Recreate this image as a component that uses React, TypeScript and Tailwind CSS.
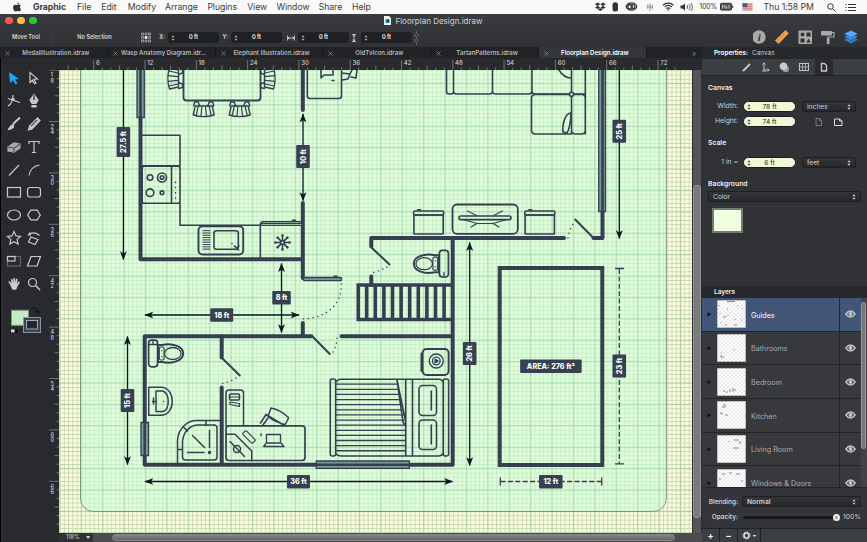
import type { ReactNode } from 'react';

const INK = '#363f51';
const ARROW = '#0a1526';

const menus: [string, string][] = [
  ['File', 'w-[24.3px]'], ['Edit', 'w-[26.5px]'], ['Modify', 'w-[37.2px]'], ['Arrange', 'w-[42.4px]'],
  ['Plugins', 'w-[39.8px]'], ['View', 'w-[29.3px]'], ['Window', 'w-[42.2px]'], ['Share', 'w-[33.4px]'], ['Help', 'w-[30px]'],
];

const tabs = ['MedalIllustration.idraw', 'Wasp Anatomy Diagram.idr...', 'Elephant Illustration.idraw', 'OldTvIcon.idraw', 'TartanPatterns.idraw', 'Floorplan Design.idraw'];

function MenuBar() {
  return (
    <header className="flex h-[14px] shrink-0 items-center bg-[#f9f9f9] text-[8.7px] text-[#3c3c3c] tracking-[-0.05px]">
      <svg className="ml-3 h-[10px] w-[10px]" viewBox="0 0 20 20" fill="#333">
        <path d="M14 1c0 2-1.700 4-4 4 0-2 2-4 4-4zM10.500 6.200c1 0 2-1 3.800-1 1.500 0 2.700.8 3.400 1.800-3 2-2.500 6 .5 7-1 2.800-2.700 5-4.200 5-1.200 0-1.800-.8-3.400-.8S8.300 19 7.200 19C4.500 19 2 14.300 2 10.900 2 7.300 4.200 5.300 6.600 5.300c1.600 0 2.800.9 3.900.9z" />
      </svg>
      <span className="ml-[11px] w-[44px] font-bold">Graphic</span>
      {menus.map(([m, w]) => <span key={m} className={`${w} shrink-0`}>{m}</span>)}
      <svg className="ml-auto mr-[12px] h-[14px] w-[164px]" viewBox="590 0 164 14" fill="none" stroke="#333" strokeWidth="1">
        <g fill="#333" stroke="none">
          <path d="M592 4.200l2.600-1.600 2.700 1.700-2.700 1.600zM597.300 4.300l2.700-1.700 2.600 1.600-2.600 1.700zM592 7.400l2.600-1.600 2.700 1.700-2.700 1.600zM597.300 7.500l2.700-1.700 2.600 1.600-2.600 1.700zM594.700 9.500l2.600-1.500 2.600 1.500-2.600 1.600z" />
          <rect x="609.500" y="2.300" width="5.500" height="9.300" rx="2.500" />
        </g>
        <ellipse cx="628.500" cy="6.500" rx="5.200" ry="3.600" strokeWidth="1.300" />
        <circle cx="627" cy="6.700" r="2.200" strokeWidth="1.300" /><circle cx="630" cy="6.500" r="1.900" strokeWidth="1.300" />
        <path d="M644.500 5v3.500l2.500-1.700zM649.500 5v3.500L647 6.800zM647 3v8" stroke="#999" />
        <path d="M660 5.200c3-2.800 7.500-2.800 10.500 0M661.700 7c2.200-2 5-2 7.200 0M663.500 8.800c1-1 2.500-1 3.700 0" strokeWidth="1.200" />
        <circle cx="665.300" cy="10" r=".8" fill="#333" stroke="none" />
        <path d="M677.500 5.500h2l2.500-2v7l-2.500-2h-2z" fill="#333" stroke="none" />
        <path d="M684 5c.8 1 .8 3 0 4M686 4c1.300 1.500 1.300 4.500 0 6M688 3c1.800 2 1.800 6 0 8" stroke="#666" />
        <text x="696.500" y="9.300" fontSize="7.500" fill="#333" stroke="none" textLength="17.500" lengthAdjust="spacingAndGlyphs">100%</text>
        <rect x="717.500" y="3.300" width="11" height="6.800" rx="1" fill="#555" /><path d="M729.800 5.500v2.500" />
        <path d="M719.500 5v3.500M722 5l-1 2h3l-1 2M726 5v3.500" stroke="#ddd" strokeWidth=".8" />
        <rect x="739.500" y="3.200" width="10" height="7" fill="#e9c5c3" stroke="none" />
        <path d="M739.500 4.200h10M739.500 6.200h10M739.500 8.200h10M739.500 10h10" stroke="#d2605c" strokeWidth=".8" />
        <rect x="739.500" y="3.200" width="4.800" height="4" fill="#465b8e" stroke="none" />
      </svg>
      <span className="-ml-[5px] w-[49px] whitespace-nowrap">Thu 1:58 PM</span>
      <svg className="ml-[14px] mr-[9.500px] h-[12px] w-[31px]" viewBox="0 0 31 12" fill="none" stroke="#333" strokeWidth="1">
        <circle cx="3.500" cy="5.500" r="2.800" /><path d="M5.500 7.500l3 3.200M21 3.500h8M21 6.500h8M21 9.500h8" /><path d="M18.500 3.500h1M18.500 6.500h1M18.500 9.500h1" />
      </svg>
    </header>
  );
}

function NumField({ label, gap }: { label: ReactNode; gap?: boolean }) {
  return (
    <div className={`flex items-center ${gap ? 'ml-[4px]' : ''}`}>
      <span className="mr-[3px] flex w-[8px] justify-end">{label}</span>
      <span className="relative flex h-[11px] w-[51px] items-center justify-center rounded-[3px] bg-[#202124] text-white">
        <span className="absolute left-[3px] text-[#aaa]"><Stepper /></span>0 ft
      </span>
    </div>
  );
}

function Stepper() {
  return <svg className="h-[6px] w-[4px]" viewBox="0 0 4 6" fill="currentColor"><path d="M.4 2.300L2 .3l1.600 2zM.4 3.700L2 5.700l1.600-2z" /></svg>;
}

function Toolbar() {
  return (
    <section className="flex h-[33px] shrink-0 flex-col bg-gradient-to-b from-[#3a3c40] to-[#303135]">
      <div className="relative flex h-[13px] items-center justify-center">
        <div className="absolute left-[5px] flex gap-[4.500px]">
          <i className="size-[7.500px] rounded-full bg-[#fc5753]" /><i className="size-[7.500px] rounded-full bg-[#fdbc40]" /><i className="size-[7.500px] rounded-full bg-[#27c93f]" />
        </div>
        <svg className="mr-[4px] h-[9px] w-[7px]" viewBox="0 0 7 9"><path d="M0 0h5l2 2v7H0z" fill="#f3f5f5" /><path d="M1.500 3h4v4h-4z" fill="#278bb6" /><path d="M3 4h2v2H3z" fill="#17425a" /></svg>
        <span className="text-[8px] text-[#d2d2d2]">Floorplan Design.idraw</span>
      </div>
      <div className="flex h-[20px] items-center pt-[1px] text-[5.600px] font-semibold text-[#d8d8d8]">
        <span className="w-[51px] pl-[12px]">Move Tool</span>
        <span className="flex h-[20px] w-[87px] items-center justify-center border-x border-[#3b3d40]">No Selection</span>
        <svg className="ml-[3px] h-[11px] w-[10px]" viewBox="0 0 10 11" fill="none" stroke="#bbb" strokeWidth=".7"><path d="M.5 1h2v2h-2zM4 1h2v2H4zM7.500 1h2v2h-2zM.5 8h2v2h-2zM4 8h2v2H4zM7.500 8h2v2h-2zM.5 4.500h2v2h-2zM7.500 4.500h2v2h-2z" /><path d="M4 4.500h2v2H4z" fill="#fff" stroke="#fff" /></svg>
        <div className="ml-[6px] flex gap-[1px]">
          <NumField label="X:" /><NumField label="Y:" />
          <NumField gap label={<svg className="h-2 w-2" viewBox="0 0 8 8" stroke="#ddd" fill="none"><path d="M.5 1.500v5M7.500 1.500v5M1 4h6M2.500 3L1 4l1.500 1M5.500 3L7 4 5.500 5" strokeWidth=".8" /></svg>} />
          <NumField label={<svg className="h-2 w-2" viewBox="0 0 8 8" stroke="#ddd" fill="none"><path d="M2 .5h4M2 7.500h4M4 1v6M3 2.500L4 1l1 1.500M3 5.500L4 7l1-1.500" strokeWidth=".8" /></svg>} />
        </div>
        <svg className="ml-[2px] h-[14px] w-[5px]" viewBox="0 0 5 14" stroke="#777" fill="none" strokeWidth=".8"><path d="M2.500 0v2M2.500 12v2M2.500 6v2" /><path d="M1 6V4c0-1.500 3-1.500 3 0v2M1 8v2c0 1.500 3 1.500 3 0V8" /></svg>
        <svg className="-mt-[2px] ml-auto mr-[6px] h-[18px] w-[108px]" viewBox="0 0 108 18" fill="#aaa">
          <circle cx="6" cy="9" r="6.700" /><text x="6.300" y="13" fill="#303135" fontSize="11" fontStyle="italic" fontWeight="700" fontFamily="Liberation Serif, serif" textAnchor="middle">i</text>
          <path d="M32.500 2l3.300 3.300L25.500 16 22 12.500z" fill="#f2a444" /><path d="M24.500 11l1.500 1.500M27 8.500l1.500 1.500M29.500 6l1.500 1.500" stroke="#91591b" strokeWidth=".8" />
          <rect x="45.500" y="2.500" width="13.500" height="13.500" rx="1" /><g fill="#303135"><circle cx="49.500" cy="6.500" r="1.900" /><rect x="53.500" y="4.500" width="4" height="4" rx=".5" /><rect x="47.500" y="10.500" width="4" height="4" rx=".5" /><path d="M53.300 14.500l2.200-4 2.200 4z" /></g>
          <rect x="68" y="3" width="11" height="4.500" rx="1" /><path d="M79 4.500h2v4.500h-6v2" stroke="#aaa" fill="none" strokeWidth="1.200" /><rect x="73.800" y="10" width="2.700" height="6" rx=".6" />
          <path d="M91 11.700l7-3.500 7 3.500-7 3.700z" fill="#317abd" /><path d="M91 8.700l7-3.500 7 3.500-7 3.700z" fill="#3b8fdc" stroke="#303135" strokeWidth=".4" /><path d="M91 5.800l7-3.500 7 3.500-7 3.700z" fill="#55a9ff" stroke="#303135" strokeWidth=".4" />
        </svg>
      </div>
    </section>
  );
}

function Tabs() {
  return (
    <nav className="flex h-[12px] items-center bg-[#222326] text-[6.050px] font-semibold text-[#b5b5b5]">
      {tabs.map((t, i) => (
        <div key={t} className={`flex h-full w-[107.800px] shrink-0 items-center border-r border-[#17181a] ${i === 5 ? 'bg-[#34363a] text-white' : ''}`}>
          <svg className="ml-[5px] h-[5px] w-[5px]" viewBox="0 0 5 5" stroke="#888"><path d="M.5.500l4 4M4.500.5l-4 4" strokeWidth=".8" /></svg>
          <span className="flex-1 whitespace-nowrap pr-[5px] text-center">{t}</span>
        </div>
      ))}
      <span className="ml-[45px] text-[8px] font-normal text-[#777]">»</span>
    </nav>
  );
}

const toolIcons: ReactNode[] = [
  <path d="M3 2l1 11 3-2.500 2.500 4 2-1.200L9 9.500l4-.5z" fill="#22a3ff" stroke="none" />,
  <path d="M4 2.500v10l2.500-2.300 2 3.500 1.500-.8-2-3.700 3.500-.2z" />,
  <><path d="M2 13c3.500-2 5-5 5-11M2 5.500l12 4" /><path d="M5.500 5H8.500V8H5.500z" fill="#c4c4c4" stroke="none" /></>,
  <><path d="M8 1.500l4 5.500-2 3.500H6L4 7z" fill="#c4c4c4" /><path d="M6 12.500h4v1.500H6z" fill="#c4c4c4" /><path d="M8 2v5" stroke="#292a2d" /></>,
  <><path d="M14 1.500L7 8" strokeWidth="2" /><path d="M7 8.500c2 3-2 5-5 5 2-1 1.500-4 5-5z" fill="#c4c4c4" /></>,
  <><path d="M11.500 2L14 4.500 6 13l-3.500 1L3.500 10z" fill="#c4c4c4" /><path d="M5 10l6-6" stroke="#555" /></>,
  <><path d="M2 8l6-4 6 1v4l-6 4-6-1z" fill="#a9a9a9" stroke="#a9a9a9" /><path d="M2 8l6 1.200L14 5M8 9v4" stroke="#555" /></>,
  <path d="M3 5V2.500h10V5M8 2.500v11M5.800 13.500h4.400" />,
  <path d="M3 13.500L13 3" />,
  <path d="M3 13.500C4 7 8 4 13.500 3" />,
  <rect x="1.500" y="3.500" width="13" height="9.500" />,
  <rect x="1.500" y="3.500" width="13" height="9.500" rx="2.500" />,
  <ellipse cx="8" cy="8" rx="6.500" ry="5" />,
  <path d="M4.800 3.200h6.400L14.300 8l-3.100 4.800H4.800L1.700 8z" />,
  <path d="M8 1.500l2 4.400 4.500.5-3.400 3 1 4.700L8 11.700l-4.100 2.400 1-4.700-3.400-3L6 5.900z" />,
  <><path d="M5 7l7 2.500-3 5-6.500-2.500z" /><path d="M2.500 5C5 2 10 2 13.500 5.500M4 2.500L2.500 5H5" /></>,
  <><rect x="1.500" y="3.500" width="13" height="9.500" stroke="#666" /><rect x="1.500" y="3.500" width="7.500" height="4.500" /></>,
  <path d="M5 3.500h9.500L11 13H1.500z" />,
  <path d="M4 8L2.500 6l1-.7L6 8 5 3.500l1.200-.3L7.500 7V2.200h1.200L9 7l1.200-4.200 1.200.4L10.700 8l2-2.500 1 .7L11.500 10 10 13.500H6.500z" fill="#d0d0d0" strokeWidth=".4" />,
  <><circle cx="6.500" cy="6.500" r="4" /><path d="M9.500 9.500l4.500 4.500" strokeWidth="1.600" /></>,
];

function ToolPalette() {
  return (
    <aside className="flex w-[49px] shrink-0 flex-col border-l border-black bg-[#292a2d] pt-[9px]">
      <div className="ml-[3px] grid auto-rows-[22.800px] grid-cols-[20px_20px]">
        {toolIcons.map((g, i) => (
          <svg key={i} className="m-auto size-[16px]" viewBox="0 0 16 16" fill="none" stroke="#cacaca" strokeWidth="1.200">{g}</svg>
        ))}
      </div>
      <svg className="ml-[9px] mt-[10px] h-[28px] w-[34px]" viewBox="10 306 34 28">
        <rect x="11.500" y="311.300" width="17" height="15" fill="#c4ecc3" stroke="#8d9290" />
        <rect x="23.500" y="318.500" width="17" height="15" fill="#394454" stroke="#8995a3" />
        <rect x="26.500" y="321.500" width="11" height="8.500" fill="#24262b" stroke="#a0a8b0" />
        <rect x="11" y="330.500" width="3.500" height="2.800" fill="#ddd" /><rect x="15" y="330.500" width="3" height="3" fill="#111" />
        <path d="M31 309c4-1 6 1 7 5M36 312l2 2 1.500-2.500" fill="none" stroke="#111" strokeWidth="1.200" />
      </svg>
    </aside>
  );
}

function HRuler() {
  const ticks = Array.from({ length: 72 }, (_, i) => i - 3);
  return (
    <svg className="block h-[12px] w-full bg-[#292a2d]" viewBox="49 58 653 12" stroke="#858585" strokeWidth=".8">
      {ticks.map((i) => {
        const x = 93.700 + i * 8.550;
        if (x > 690) return null;
        const h = i % 6 === 0 ? 10 : i % 3 === 0 ? 4.500 : 2.500;
        return <g key={i}><path d={`M${x} 70v${-h}`} />{i % 6 === 0 && <text x={x + 2.300} y="65" fontSize="6" fontWeight="500" fill="#d0d0d0" stroke="none">{i + 6}</text>}</g>;
      })}
    </svg>
  );
}

function VRuler() {
  const ticks = Array.from({ length: 54 }, (_, i) => i - 6);
  return (
    <svg className="block h-[472px] w-[10px] shrink-0 bg-[#292a2d]" viewBox="49 70 10 472" stroke="#858585" strokeWidth=".8">
      {ticks.map((i) => {
        const y = 121.500 + i * 8.567;
        if (y > 531) return null;
        const w = i % 6 === 0 ? 10 : i % 3 === 0 ? 4.500 : 2.500;
        const s = String(24 + i);
        return <g key={i}><path d={`M59 ${y}h${-w}`} />{i % 6 === 0 && <text fontSize="5.500" fontWeight="500" fill="#d0d0d0" stroke="none"><tspan x="50.500" y={y + 7.300}>{s[0]}</tspan><tspan x="50.500" y={y + 12.500}>{s[1]}</tspan></text>}</g>;
      })}
    </svg>
  );
}

function Label({ x, y, w, text, vertical }: { x: number; y: number; w: number; text: string; vertical?: boolean }) {
  return (
    <g transform={`translate(${x} ${y})${vertical ? ' rotate(-90)' : ''}`}>
      <rect x={-w / 2} y={-6.800} width={w} height={13.600} rx="1" fill="#374052" />
      <text textAnchor="middle" y="2.700" fontSize="7.200" fontWeight="800" fill="#f6fff2">{text}</text>
    </g>
  );
}

function Dim({ d }: { d: string }) {
  return <path d={d} stroke={ARROW} strokeWidth="1.300" fill="none" markerStart="url(#arrow)" markerEnd="url(#arrow)" />;
}

function Chair({ x, y, r = 0 }: { x: number; y: number; r?: number }) {
  return (
    <g transform={`translate(${x} ${y}) rotate(${r})`} strokeWidth="1.400">
      <path d="M-8.500-7.500h3l1.500 4M8.500-7.500h-3L4-3.500" /><path d="M-8.500-3.500h17l2 9c-6 2-15 2-21 0z" />
      <path d="M-5.500-3l-2 9M-1.800-3l-1 10M1.800-3l1 10M5.500-3l2 9" strokeWidth="1.200" /><path d="M-9-7.500l-1 4M9-7.500l1 4" />
    </g>
  );
}

const PAGE = 'M80.500 60v438.500a13 13 0 0 0 13 13h559.800a13 13 0 0 0 13-13V60';

function Canvas() {
  const stripes = Array.from({ length: 14 }, (_, i) => 384.200 + i * 5.120);
  const treads = Array.from({ length: 10 }, (_, i) => 366.700 + i * 8.600);
  return (
    <svg className="block h-[463px] w-[633px]" viewBox="59 70 633 463" fill="none" stroke={INK} strokeLinecap="round" strokeLinejoin="round">
      <defs>
        <pattern id="fine" x="80.900" y="83.100" width="4.280" height="4.280" patternUnits="userSpaceOnUse"><path d="M0 .5H4.280M.5 0V4.280" stroke="#8fd0a0" strokeOpacity=".34" strokeWidth=".8" strokeLinecap="butt" /></pattern>
        <pattern id="coarse" x="80.500" y="82.700" width="21.400" height="21.400" patternUnits="userSpaceOnUse"><path d="M0 .8H21.400M.8 0V21.400" stroke="#7fc090" strokeOpacity=".5" strokeWidth="1" strokeLinecap="butt" /></pattern>
        <pattern id="outer" x="80.900" y="83.100" width="4.280" height="4.280" patternUnits="userSpaceOnUse"><path d="M0 .5H4.280M.5 0V4.280" stroke="#a8bd90" strokeOpacity=".62" strokeWidth=".9" strokeLinecap="butt" /></pattern>
        <marker id="arrow" markerUnits="userSpaceOnUse" markerWidth="9" markerHeight="7.500" refX="7" refY="4" viewBox="0 0 8 8" orient="auto-start-reverse" preserveAspectRatio="none"><path d="M0 .3L8 4 0 7.700 2 4z" fill={ARROW} stroke="none" /></marker>
      </defs>
      <g stroke="none">
        <rect x="59" y="70" width="633" height="463" fill="#fbfde0" />
        <rect x="59" y="70" width="633" height="463" fill="url(#outer)" />
        <rect x="59" y="70" width="633" height="463" fill="url(#coarse)" />
        <path d={PAGE} fill="#e1fddc" /><path d={PAGE} fill="url(#fine)" /><path d={PAGE} fill="url(#coarse)" />
      </g>
      <path d={PAGE} stroke="#70917a" strokeWidth=".9" />

      <g strokeWidth="4">
        <path d="M140.500 60V259.300H302.800M302.800 60V110M302.800 203V278M302.800 323V334" />
        <path d="M371.300 246.500V238H564M452.700 238V464.700H144.700V336.300H311.500M341.500 336.300H452M371.300 276.500V285M593.500 238H602.500V60" />
        <path d="M221.700 336.300V357.500M221.700 387.500V464" />
        <rect x="499.700" y="268" width="102.600" height="197" strokeLinejoin="miter" />
      </g>
      <g fill="#7b9b98" stroke={INK} strokeWidth="1.300" strokeLinejoin="miter">
        <path d="M137 60h7.300v57.500H137zM598.700 60h6.800v151.500h-6.800zM141 422.500h7.500v33H141zM316.300 461h93v7.300h-93z" />
        <rect x="303.500" y="277.500" width="38" height="3.200" rx="1" />
      </g>
      <path d="M140.500 70v47M602.500 70v141M144.700 423v32M317 464.700h92" strokeWidth="2.600" />
      <path d="M334 276.300h3" strokeWidth="1.500" />
      <g strokeWidth="2">
        <path d="M372 248L389.500 264.500M575.200 219.500L592.500 237M313 337L329.700 354M223 359L239.800 375.500" />
      </g>
      <g strokeWidth="1.400" strokeDasharray="0.100 4.700">
        <path d="M341.300 284C342 305 326 318 303 319M387 267Q380 271 371 273M568 238Q569 229 575 221M333 352Q337 345 337 336.500M236 378Q230 382 222 383.500" />
      </g>

      <g strokeWidth="1.600">
        <path d="M142 135.300h38V165.500M142 165.900h38M180 203v22.200h80M260.300 258V225q0-3.300 3.300-3.300H302" />
        <rect x="142.200" y="166.300" width="37.800" height="37" rx="2" /><path d="M171.500 166.500v37" />
        <circle cx="150" cy="177.500" r="2.800" /><circle cx="162" cy="177.500" r="4.500" /><circle cx="162" cy="177.500" r="1.800" /><circle cx="150" cy="192.700" r="3.800" /><circle cx="162" cy="192.700" r="1.800" />
        <path d="M175.500 182.300v.1M175.500 187.500v.1M175.500 192.800v.1M175.500 198v.1" />
        <rect x="198.500" y="226.200" width="44.700" height="28.300" rx="4" strokeWidth="1.900" /><rect x="214" y="230.700" width="24.300" height="18.600" rx="2.500" />
        <path d="M202.500 230.700h8M202.500 233h8M202.500 235.300h8M202.500 237.600h8M202.500 239.900h8M202.500 242.200h8M202.500 244.500h8M202.500 246.800h8M202.500 249.100h8" strokeWidth="1" strokeLinecap="butt" />
        <path d="M232 243.500v.1M234.500 246l4 4M239 246l-4 3.500" />
        <path d="M262 223.500h40v2H262z" fill="#9bb8a8" strokeWidth="1" /><path d="M292.500 220.300h3" />
        <g transform="translate(282.500 242.500)">
          {[0, 45, 90, 135, 180, 225, 270, 315].map((a) => <g key={a} transform={`rotate(${a})`}><path d="M0 2v4.500" /><circle cy="-7" r="1.300" fill={INK} stroke="none" /></g>)}<circle r="2" />
        </g>
        <path d="M183.500 60v37.500q0 3 3 3h71q3 0 3-3V60" strokeWidth="1.800" />
        <Chair x={203.700} y={109.500} /><Chair x={239.700} y={109.500} /><Chair x={175} y={78.500} r={90} /><Chair x={268} y={78.500} r={-90} />
        <path d="M307.300 60v36q0 2.500 2.500 2.500h29.200q2.500 0 2.500-2.500V60M321 70v8l3-3h9v-5M332 80.500h2M342 73l8 1-2 5-6 1M350 74l2-4M351 77l5 1 1-8" />
      </g>

      <g strokeWidth="1.600">
        <path d="M446.500 60v31.500q0 2.500 2.500 2.500h2q2.500 0 2.500-2.500V60M453.500 60v31q0 3 3 3h33q3 0 3-3V60M492.500 60v31q0 3 3 3h33.500q3 0 3-3V60M532 60v31q0 3 3 3h33.500q3 0 3-3V60M571.500 60v31q0 3 3 3h10.500" />
        <path d="M535.500 94.500h33q3 0 3 3v36.500h-36q-4 0-4-4V98.500q0-4 4-4zM571.500 130V98q0-3.500 3.500-3.500h6.800q3.500 0 3.500 3.500V130q0 4-4 4H576q-4.500 0-4.500-4zM585.300 60v74" /><path d="M571 113c-6 0-9 12-8 19l4 1c2-3 4-12 4-20M559 70q5 8 12 8" />
        <circle cx="571.500" cy="94.200" r="2" fill="#e1fcdb" />
        {[413.600, 524.800].map((x) => <g key={x}><rect x={x} y="211" width="30" height="4" rx="1" /><rect x={x + .3} y="215" width="29.300" height="19" rx=".5" /><path d={`M${x + 4} 209.800h3`} /></g>)}
        <rect x="452.500" y="204.500" width="65.300" height="29.300" rx="4.500" strokeWidth="1.800" /><rect x="459" y="216" width="52" height="3.600" rx="1.800" />
        <path d="M467.500 211l9 4.500M502.500 211l-9 4.500M463 219.500l14 4h16l14-4M477 223.500l-6 3.500M493 223.500l6 3.500" strokeWidth="1.200" />
      </g>

      <g strokeWidth="3.600" strokeLinejoin="miter"><path d="M452 285H358.300v34.500H452" />{treads.map((x) => <path key={x} d={`M${x} 286v33`} />)}</g>

      {[0, 1].map((i) => (
        <g key={i} transform={i ? 'translate(148.300 353.500)' : 'translate(448.700 263.700) scale(-1 1)'} strokeWidth="1.700">
          <rect x=".3" y="-13.300" width="9" height="26.600" rx="3" />
          <path d="M10-8.500h4c12-2.500 22 2 22 8.500s-10 11-22 8.500h-4z" strokeWidth="2" transform="scale(.97 1)" />
          <ellipse cx="24.500" rx="8.300" ry="6" strokeWidth="1.300" /><rect x="11" y="-6.500" width="4.800" height="13" rx="1.500" strokeWidth="1.200" />
          <path d="M13.500-3v.1M13.500 3v.1" strokeWidth="1.200" /><path d={i ? 'M.5-9h8.500M4.700-13v4' : 'M4.700 9v4'} stroke={i ? INK : '#26309a'} strokeWidth="1.300" />
        </g>
      ))}

      <g strokeWidth="1.500">
        <path d="M148.700 387.300H161c15 0 15 28 0 28H148.700zM156 391h7c7 3 7 18 0 20.500h-7zM152.500 401.500h4M153.500 398v6M163.500 401.500v.1" />
        <path d="M177.500 463V440c1-12 10-19.500 19-19.500H220M177.500 449.500h5M206 421v4.500M184 427.500l3.500 3.500" />
        <path d="M182.500 457v-16c1-9 7-16 16-16h15.500q3 0 3 3v29q0 3-3 3h-28.500q-3 0-3-3zM209.500 430.500v17M192.500 435.500l12 12M187.500 452.500h16.500" /><circle cx="209.500" cy="452.500" r="1" fill={INK} />
        <path d="M226 426V393q0-3 3-3h11.500q3 0 3 3v32.500" /><rect x="226" y="425.800" width="79" height="34.700" rx="3" strokeWidth="1.700" /><path d="M226.500 434.300h8.500L251.700 451v9.500M230 441.500l14.500 15" />
        <circle cx="237" cy="449" r="3.500" /><rect x="229.500" y="394" width="10" height="6" rx="1" /><path d="M229.500 397h10M230 402l9.500 1.500v3l-9.500-2z" strokeWidth="1.200" />
        <rect x="-7" y="-2.500" width="14" height="5" rx="1.500" transform="translate(249 437) rotate(45)" strokeWidth="1.200" /><path d="M261 434v1.500" /><path d="M266.500 434.500h14V443h-14zM266 443.500l-2.500 3h20.500l-2.500-3" strokeWidth="1.300" />
        <path d="M271 408q9 1.500 17.500 9.500c.5.500-3 6.500-3.500 7-6-1-12-4-17-8zM260.500 423l5.500-8.500 17.500 10.500M263 425l5-7" />
      </g>

      <g strokeWidth="1.600">
        <rect x="422.600" y="349" width="26" height="26" rx="4" strokeWidth="1.900" /><path d="M421.500 353.500v17.500" strokeWidth="2" /><circle cx="436.300" cy="361" r="7" strokeWidth="1.300" /><circle cx="436.300" cy="361" r="3.800" strokeWidth="1.300" /><path d="M435.300 359.500l2.500 1.500-2.500 1.500z" stroke="#20348d" />
        <rect x="330.300" y="379" width="5.400" height="77" rx="2" /><rect x="443.200" y="379" width="5.400" height="77" rx="2" />
        <path d="M335.700 382q2-2.700 5-2.700h98q3 0 4.500 2.700M335.700 453.500q2 2.500 5 2.500h98q3 0 4.500-2.500M405.700 380v75.500M412.500 380v75.500M397 380l8.500 41M397 380l6 42 2.500 4" />
        {stripes.map((y) => <path key={y} d={`M336 ${y}H${Math.min(405, 397 + (y - 380) * .18)}`} strokeWidth="1.300" />)}
        <rect x="419" y="385.500" width="17.500" height="30" rx="3.500" /><rect x="419" y="420" width="17.500" height="29.500" rx="3.500" /><path d="M431.300 391v19M431.300 425v19" />
      </g>

      <Dim d="M123.400 60V259" /><Dim d="M303 114.500V200" /><Dim d="M619.300 60V238" /><Dim d="M281.500 264V332" />
      <Dim d="M145.500 315H298.500" /><Dim d="M127.500 337V464" /><Dim d="M145.500 481.500H452" /><Dim d="M469.700 243V465" />
      <g strokeWidth="1.300" strokeLinecap="butt"><path d="M619.300 269V464M500.500 481.500H601.500" strokeDasharray="5 2.400" /><path d="M615 268.500h9M615 463.800h9M500.300 477.500v8M601.700 477.500v8" /></g>

      <g stroke="none">
        <Label x={123.400} y={142} w={30} text="27.5 ft" vertical /><Label x={303} y={156.600} w={23} text="10 ft" vertical /><Label x={619.300} y={131.300} w={23} text="25 ft" vertical />
        <Label x={281.500} y={297.700} w={18.500} text="8 ft" /><Label x={221.700} y={315} w={23} text="18 ft" /><Label x={127.500} y={400.500} w={23} text="15 ft" vertical />
        <Label x={298.500} y={481.700} w={23} text="36 ft" /><Label x={469.700} y={353.400} w={23} text="26 ft" vertical /><Label x={619.300} y={366} w={23} text="23 ft" vertical />
        <Label x={550.800} y={481.700} w={23.500} text="12 ft" /><Label x={550.900} y={366.300} w={61.500} text="AREA: 276 ft²" />
      </g>
    </svg>
  );
}

function Document() {
  return (
    <section className="flex w-[653px] shrink-0 flex-col">
      <HRuler />
      <div className="flex h-[472px]">
        <VRuler />
        <div className="flex flex-col">
          <div className="flex">
            <Canvas />
            <div className="flex w-[10px] flex-col border-x border-[#2b2c2f] bg-[#555] pt-[115px]"><i className="h-[333px] rounded-[3px] border border-[#959595] bg-[#7a7a7a]" /></div>
          </div>
          <div className="flex h-[9px] items-center bg-[#4b4c4e]">
            <div className="flex h-full w-[34px] items-center justify-between bg-[#303135] pl-[7px] pr-[3px] text-[5.500px] text-[#ddd]">118%<span className="text-[4px]">▼</span></div>
            <i className="ml-[19px] h-[7px] w-[563px] rounded-full border border-[#858585] bg-gradient-to-b from-[#858585] to-[#646464]" />
          </div>
        </div>
      </div>
    </section>
  );
}

function Value({ children }: { children: string }) {
  return <span className="relative flex h-[11px] w-[53px] items-center justify-center rounded-full border border-[#191a1c] bg-[#f0f8d9] pt-[1px] text-[6.700px] text-[#222]"><i className="absolute left-[3px] flex text-[#444]"><Stepper /></i>{children}</span>;
}

function Select({ children, wide }: { children: string; wide?: boolean }) {
  return <span className={`flex h-[11px] items-center justify-between rounded-[2px] border border-[#1e1f21] bg-gradient-to-b from-[#333438] to-[#27282b] px-[4px] pt-[1px] text-[6.700px] text-[#d0d0d0] ${wide ? 'flex-1' : 'w-[54px]'}`}>{children}<Stepper /></span>;
}

function Properties() {
  return (
    <section className="h-[239px] shrink-0 bg-[#313236] text-[6.800px] text-[#ccc]">
      <div className="flex h-[12px] items-center gap-[4px] bg-[#27282b] pl-[12px] pt-[1px] text-[6.400px]"><b className="font-semibold text-white">Properties:</b>Canvas</div>
      <div className="h-[17px] border-b border-[#222] bg-[#3b3f43]">
        <svg className="block h-[16px] w-[165px]" viewBox="702 59 165 16" fill="none" stroke="#c5c5c5" strokeWidth="1">
          <rect x="815" y="59" width="18" height="16" fill="#292b2e" stroke="none" />
          <path d="M743 71l7-7" strokeWidth="2" /><path d="M764 63v7h5M762.500 64.500l1.500-1.700 1.500 1.700M767.500 68.500l1.700 1.500-1.700 1.500M762 71h4" />
          <circle cx="785.800" cy="69" r="3.200" fill="#999" stroke="none" /><circle cx="783.500" cy="66.300" r="3.700" fill="#ccc" stroke="none" />
          <rect x="799.500" y="63.500" width="9" height="7" /><path d="M802.500 63.500v7M805.500 63.500v7M799.500 67h9" strokeWidth=".7" />
          <path d="M821.500 63.500h3l2 2v5.500h-5z" strokeWidth="1.400" />
        </svg>
      </div>
      <div className="px-[6px]">
        <h3 className="flex h-[23px] items-center pt-[1px] font-semibold text-[#eee]">Canvas</h3>
        <div className="flex h-[15px] items-center"><span className="mr-[5px] w-[30px] text-right">Width:</span><Value>78 ft</Value><span className="ml-[6px]"><Select>inches</Select></span></div>
        <div className="flex h-[15px] items-center"><span className="mr-[5px] w-[30px] text-right">Height:</span><Value>74 ft</Value>
          <svg className="ml-[18px] h-[10px] w-[34px]" viewBox="0 0 34 10" fill="none" stroke="#777"><path d="M2 1.500h3.500l2 2v5H2zM5.500 1.500v2h2" /><path d="M20.500 2h5l2.500 2v4.500h-7.500zM25.500 2v2H28" stroke="#ddd" /></svg>
        </div>
        <h3 className="mt-[7px] flex h-[14px] items-center pt-[1px] font-semibold text-[#eee]">Scale</h3>
        <div className="mt-[5px] flex h-[15px] items-center"><span className="mr-[5px] w-[30px] text-right">1 in =</span><Value>6 ft</Value><span className="ml-[6px]"><Select>feet</Select></span></div>
        <h3 className="mt-[6px] flex h-[16px] items-center pt-[1px] font-semibold text-[#eee]">Background</h3>
        <div className="-mt-[1px] flex"><Select wide>Color</Select></div>
        <i className="ml-[4px] mt-[6px] block h-[25px] w-[31px] border-2 border-[#777974] bg-[#f0ffdf]" />
      </div>
    </section>
  );
}

const layers: [string, string][] = [
  ['Guides', 'M10 1.500h8M2 5v1M10 9h1M20 6h1M25 8v1M6 17h3M18 19v1M3 13v1M4 22v1M24 20h1M8 25h2M17 25h3M11 15v1'],
  ['Bathrooms', 'M17 15v1M4 19h1M4 21v2h3'],
  ['Bedroom', 'M7 22v2M9 24h2M13 21v3M16 20v4M17 22h2'],
  ['Kitchen', 'M5 6h4M6 4h3M4 11v2h2M8 14h3'],
  ['Living Room', 'M12 6v1M17 5h5M23 6v3M16 13h6'],
  ['Windows & Doors', 'M5 5h3M12 4h3M19 5h4M3 9v2M25 11v2'],
];

function Layers() {
  return (
    <section className="flex h-[256px] flex-col bg-[#36373b]">
      <h2 className="flex h-[12px] shrink-0 items-center bg-[#27282b] pl-[12px] pt-[1px] text-[6.500px] font-semibold text-[#eee]">Layers</h2>
      <div className="flex h-[189px] overflow-hidden">
        <div className="w-[159px]">
          {layers.map(([name, d], i) => (
            <div key={name} className={`flex h-[33.700px] items-center border-b border-[#242528] ${i === 0 ? 'bg-[#415577] text-white' : 'bg-[#38393d] text-[#aaa]'}`}>
              <span className="ml-[5px] mr-[5px] w-[5px] pt-[1px] text-[5px] text-[#121419]">▶</span>
              <svg className="h-[28px] w-[29px]" viewBox="0 0 29 28">
                <defs><pattern id="checks" width="4" height="4" patternUnits="userSpaceOnUse"><path d="M0 0h4v4H0z" fill="#fff" /><path d="M0 0h2v2H0zM2 2h2v2H2z" fill="#ebebeb" /></pattern></defs>
                <rect width="29" height="28" fill="url(#checks)" stroke="#888" /><path d={d} fill="none" stroke="#858b91" strokeWidth="1" />
              </svg>
              <span className="ml-[5px] w-[88px] pt-[2px] text-[7.200px]">{name}</span>
              <span className="flex h-full flex-1 items-center justify-center border-l border-[#27282b]">
                <svg className="h-[8px] w-[11px]" viewBox="0 0 11 8" fill="none" stroke="#c5c5c5" strokeWidth="1.400"><path d="M.8 4Q5.500-2 10.200 4 5.500 10 .8 4z" /><circle cx="5.500" cy="4" r="1.200" fill="#c5c5c5" /></svg>
              </span>
            </div>
          ))}
        </div>
        <div className="w-[6px] bg-[#424346] pt-[4px]"><i className="block h-[147px] w-[5px] rounded-full border border-[#999] bg-[#777]" /></div>
      </div>
      <div className="h-[41px] border-t border-[#242528] bg-[#34353a] px-[6px] text-[6.400px] font-semibold text-[#ccc]">
        <div className="mt-[7px] flex h-[13px] items-center"><span className="mr-[4px] w-[30px] pt-[1px] text-right">Blending:</span><Select wide>Normal</Select></div>
        <div className="mt-[2px] flex h-[14px] items-center"><span className="mr-[5px] w-[30px] pt-[1px] text-right">Opacity:</span><i className="h-[3px] w-[91px] rounded bg-[#161719]" /><i className="-ml-[1px] size-[7px] shrink-0 rounded-full border-2 border-[#eee] bg-[#999]" /><span className="ml-[3px] text-[6.700px] font-normal">100%</span></div>
      </div>
      <div className="flex h-[14px] items-center border-t border-[#222] bg-[#3b3f44] text-[9px] text-white">
        <b className="w-[18px] border-r border-[#222] text-center leading-[13px]">+</b><b className="w-[18px] border-r border-[#222] text-center leading-[13px]">−</b>
        <span className="flex h-[13px] w-[23px] items-center justify-center border-r border-[#222]"><svg className="h-[9px] w-[15px]" viewBox="0 0 15 9"><circle cx="4.500" cy="4.500" r="2.500" fill="none" stroke="#ddd" strokeWidth="1.500" /><circle cx="4.500" cy="4.500" r="3.600" fill="none" stroke="#ddd" strokeDasharray="1.300 1.500" /><path d="M10.500 4h4l-2 2z" fill="#ddd" /></svg></span>
      </div>
    </section>
  );
}

export default function App() {
  return (
    <main className="flex h-[542px] w-[867px] flex-col overflow-hidden bg-[#292a2d] font-['Inter','Liberation_Sans',sans-serif] leading-none">
      <MenuBar />
      <Toolbar />
      <div className="flex h-[495px]">
        <div className="flex w-[702px] flex-col">
          <Tabs />
          <div className="-mt-px flex h-[484px]"><ToolPalette /><Document /></div>
        </div>
        <div className="flex w-[165px] flex-col"><Properties /><Layers /></div>
      </div>
    </main>
  );
}
